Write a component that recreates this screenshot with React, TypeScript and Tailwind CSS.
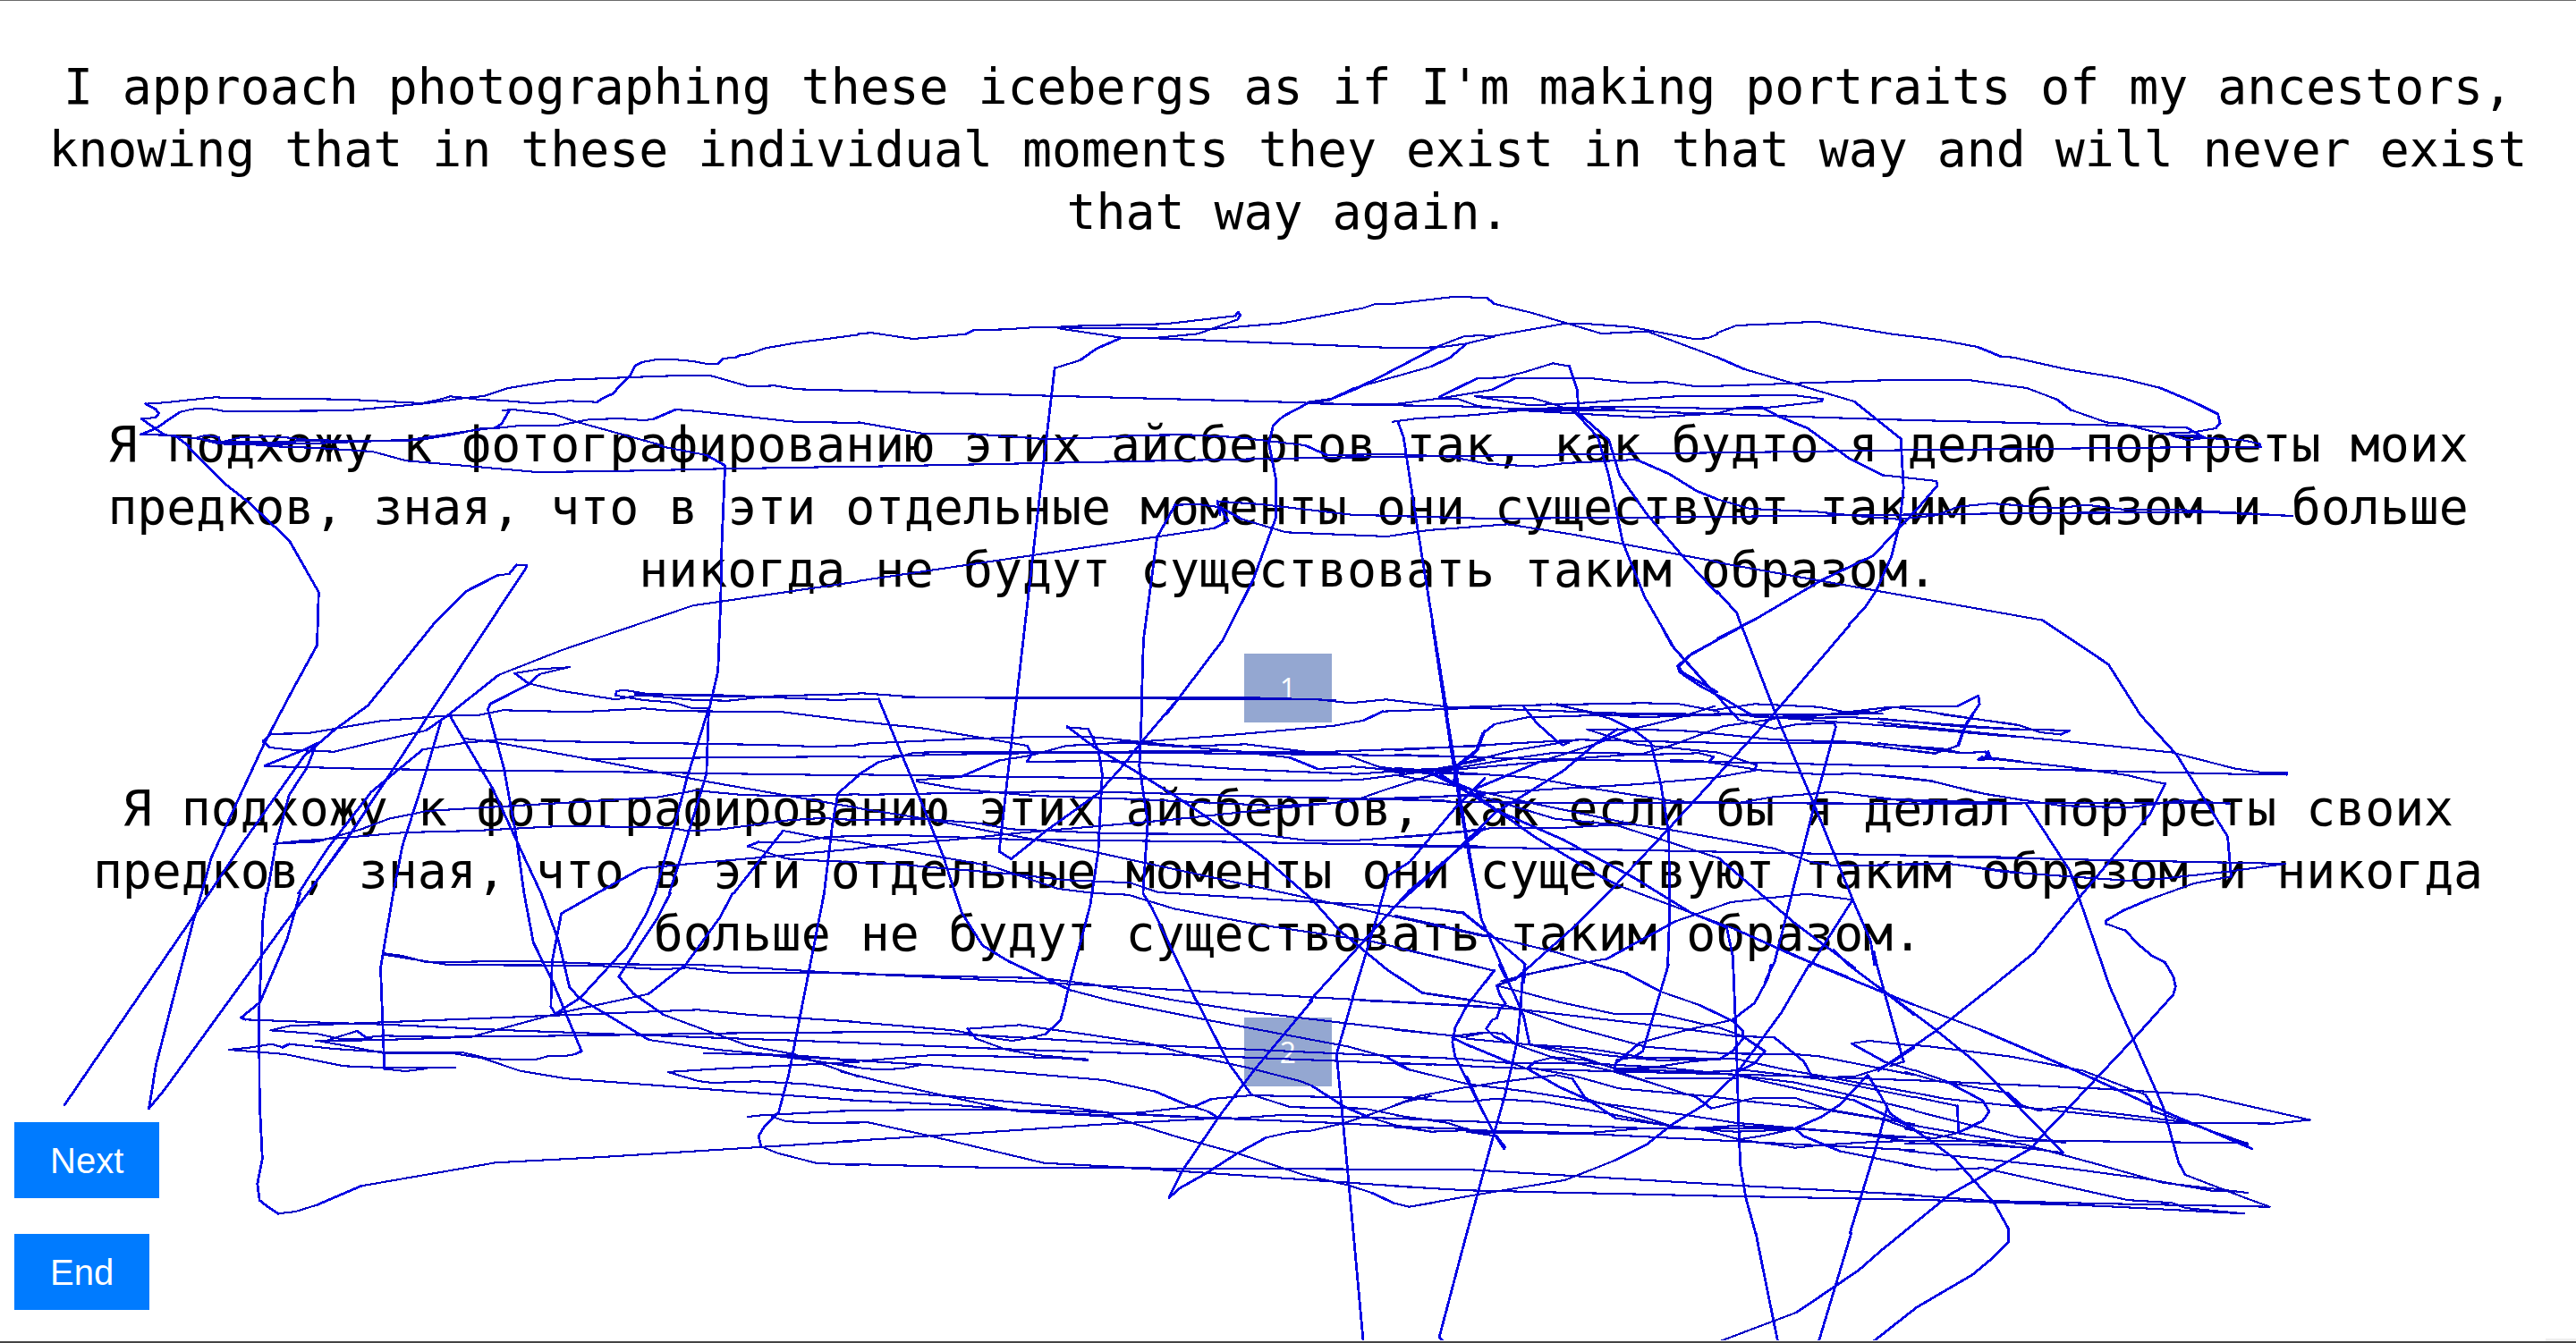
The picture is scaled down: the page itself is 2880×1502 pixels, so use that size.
import React from "react";

type Tile = { x: number; y: number; kx: number; ky: number; strokes: string[] };

// Pen strokes, grouped by board section; each section has its own origin and units per pixel.
const tiles: Tile[] = [
  {
    x: 0, y: 0, kx: 1.6333, ky: 3,
    strokes: [
      "260,1408 284,1404 290,1390 284,1376 266,1358 300,1354 392,1336 430,1339 560,1341 640,1344 770,1356 800,1345 822,1333 850,1338 880,1345 920,1347 980,1357 1040,1348 1090,1352 1104,1336 1118,1325 1130,1302 1150,1265 1160,1230 1172,1218 1200,1209 1225,1208 1265,1215 1294,1225 1310,1224 1320,1206 1344,1202 1352,1194 1366,1192 1398,1171 1455,1153 1510,1140 1568,1126",
      "258,1460 285,1440 328,1386 350,1376 370,1373 392,1376 412,1384 500,1382 630,1381 700,1370 775,1357 850,1338 884,1332 928,1305 1015,1279 1150,1269 1240,1263 1295,1262 1368,1300 1415,1297 1455,1309 1568,1314",
      "258,1408 300,1462 320,1465 345,1500",
      "256,1460 300,1463 350,1472 400,1485 500,1487 580,1480 640,1482 740,1482 780,1475 830,1460 880,1440 905,1440 950,1431 1020,1430 1075,1411 1130,1407 1175,1413 1192,1410 1234,1377 1270,1382 1450,1418 1568,1422",
      "355,1474 375,1463 400,1470 400,1488 560,1492 750,1478 860,1448 905,1438 916,1425 930,1380 918,1379 940,1378 1012,1393 1050,1417 1210,1498",
      "400,1488 440,1470 498,1468 530,1472 590,1484",
      "370,1478 400,1492 480,1496 560,1490",
    ],
  },
  {
    x: 960, y: 300, kx: 1.6333, ky: 3,
    strokes: [
      "0,222 24,220 100,240 195,224 210,211 270,208 330,200 400,203 620,207 650,206 775,187 920,137 945,122 970,124 1090,98 1148,103 1160,122 1228,152 1356,222 1440,215 1568,302",
      "370,198 560,190 688,163 693,150 697,160 692,175 620,223 540,237 480,236 365,205",
      "478,238 435,272 404,312 358,338 336,680 318,970 285,1500",
      "530,237 985,271 1062,268 1110,256 1160,233 1135,228 1105,232 1062,262 960,360 905,410 865,440 820,452",
      "1110,256 1080,303 1045,333 905,405 860,445 830,455",
      "1160,230 1285,190 1320,188 1410,200 1525,240 1550,238 1568,225",
      "0,414 350,431 800,453 850,458 975,460 1060,440 1158,410 1198,372 1340,373 1410,387 1475,385 1530,400 1568,398",
      "820,454 920,462 1085,465 1200,475 1400,467 1568,474",
      "1060,435 1130,372 1175,370 1215,352 1268,322 1298,332 1312,410 1315,490 1370,580 1390,700 1440,830 1510,980 1568,1095",
      "1058,440 1095,442 1130,465 1210,480 1440,504 1568,490",
      "1125,433 1230,438 1270,460 1315,490",
      "1125,433 1225,463 1320,455 1500,432 1568,432",
      "1200,478 1380,480 1568,492",
      "975,518 1020,507 1120,496 1210,480 1380,475",
      "985,520 995,570 1020,870 1075,1500",
      "820,456 775,500 757,530 749,590 762,710 762,840 720,1050 665,1250 562,1500",
      "0,520 115,557 200,558 340,576 410,573 520,563 600,562 690,570 815,597 855,630 980,627 1080,635 1150,660 1240,668 1290,657 1420,645 1480,693 1530,750 1568,778",
      "0,669 520,650 870,638 1568,622",
      "578,797 620,795 660,805 675,850 650,875 340,960 0,1052",
      "660,830 655,785 735,795 900,830 1150,843 1568,837",
      "660,805 700,845 780,889 965,903 1040,882 1185,862 1300,895 1568,988",
      "578,797 545,905 520,1250 516,1500",
      "1310,490 1350,570 1370,700 1395,920 1435,1105 1490,1280 1568,1440",
      "1568,1250 1520,1300 1497,1340 1505,1360 1568,1425",
      "0,1428 120,1444 720,1444 870,1452",
    ],
  },
  {
    x: 1920, y: 300, kx: 1.6333, ky: 3,
    strokes: [
      "0,220 35,195 100,190 180,182 320,224 405,243 475,267 518,299 540,302 640,343 735,371 808,404 870,452 914,492 918,523 910,540 870,553 810,558",
      "0,302 50,342 130,385 250,450 335,575 340,740 333,860 318,970 290,1085 270,1140 240,1200",
      "0,398 320,378 455,377 565,405 620,443 645,478 710,520 740,525 810,558 890,572 960,580 990,592 992,602 850,604 300,614 0,622",
      "0,432 140,429 192,442 190,450 80,473 0,474",
      "0,490 40,470 80,468 112,500 165,540 240,640 302,697 400,717 402,732 370,800 285,967 190,1050 70,1180 0,1245",
      "0,492 300,510 700,529 857,538 890,572 860,580 830,565 880,565",
      "0,778 60,810 180,820 260,835 330,845 400,832 440,803 500,792 620,808 675,797 740,812 850,814 1050,834 900,822 600,824 0,837",
      "0,990 190,1052 594,1184 714,1332 772,1500",
      "0,1088 36,1160 46,1215",
    ],
  },
  {
    x: 0, y: 500, kx: 1.6333, ky: 3,
    strokes: [
      "343,0 408,122 455,190 528,316 582,490 579,668 535,815 482,1000 386,1380 368,1500",
      "490,0 580,6 680,18 742,49 870,69 980,87 1140,83 1320,76 1568,68",
      "1205,0 1290,30 1324,65 1318,330 1316,520 1311,755 1294,890 1290,1100 1275,1190 1240,1400 1222,1500",
      "1294,880 1255,1110 1235,1250 1196,1500",
      "1090,1500 1172,1416 1568,1350",
      "382,1500 440,1340 555,1040 612,950 672,870 795,590 853,485 908,434 930,428 943,398 962,400 960,410 780,910 630,1330 562,1500",
      "545,1500 600,1345 678,1160 772,1018 850,995 915,984 1035,991 1400,1002 1500,1009 1568,1003",
      "562,1500 640,1300 712,1100",
      "484,1072 560,1015 578,998 560,1080 528,1170 503,1340 488,1500",
      "484,1074 600,1079 670,1083 1090,1092 1380,1100 1568,1105",
      "480,990 495,965 560,964 695,922 810,905 875,902 918,886 1060,892 1176,880 1230,889 1425,891 1568,924",
      "480,990 492,1011 540,1020 610,1025 690,990 778,954 820,900 910,768 1025,685 1265,535 1568,454",
      "806,918 770,1140 735,1340 718,1500",
      "820,900 900,1150 950,1350 988,1500",
      "1040,742 985,748 940,762 965,796 1020,820 1125,850 1160,838 1220,835 1380,842 1420,838 1568,831",
      "1040,741 985,765 965,800 895,865 891,884 920,1080 942,1300 957,1500",
      "1185,832 1140,818 1126,822 1124,836 1175,852 1230,860 1262,878 1294,880",
      "1160,832 1300,834 1530,852 1568,848",
      "1180,836 1270,852 1330,854 1390,842",
      "848,981 905,994 1070,1048 1290,1125 1568,1214",
      "1070,1050 1300,1045 1568,1041",
      "500,1334 580,1327 660,1285 710,1250 780,1224 880,1213 1200,1178 1270,1155 1355,1170 1430,1174 1568,1168",
      "500,1334 550,1324 600,1318 740,1296 870,1290 1030,1274 1225,1280 1255,1291 1310,1287 1440,1255 1500,1248 1568,1255",
      "1568,1105 1530,1165 1520,1270 1505,1500",
      "1340,1500 1430,1290 1500,1315 1568,1330",
      "1568,1308 1510,1311 1455,1330 1385,1328 1366,1342 1435,1384 1500,1391 1568,1396",
    ],
  },
  {
    x: 0, y: 1000, kx: 1.6333, ky: 3,
    strokes: [
      "368,0 352,100 285,575 272,722",
      "1196,0 1180,70 1145,180 1060,350 1014,405 1006,380 1008,230 1025,68 1090,0",
      "1224,0 1200,85 1130,280 1156,336 1212,408 1365,511 1450,540 1568,616",
      "118,710 382,0",
      "562,0 525,90 300,660 272,722",
      "548,0 524,155 475,365 440,418 448,424 590,434 700,440 930,460 1200,478 1568,502",
      "486,0 480,90 473,400 474,700 479,890 470,975 474,1030 486,1048 508,1075 540,1068 580,1045 660,982 905,904 1100,885 1300,862 1568,831",
      "718,0 695,250 702,590",
      "988,0 1020,160 1040,315 1058,352 1165,470 1185,492 1310,525 1460,550 1568,560",
      "957,0 974,165 1010,300 1062,530 1050,540 1035,545 1000,547 980,557 935,559 890,554 842,533 700,533 610,522 528,506 516,517 496,506 455,518 418,525",
      "1505,0 1440,610 1422,735 1395,785 1385,815 1390,850 1420,872 1490,905 1568,913",
      "1338,0 1315,80 1252,240 1184,338 1014,405 860,482 700,492 590,496 576,496",
      "702,202 735,210 780,232 955,227 1110,238 1270,240 1380,250 1568,272",
      "702,206 820,241 1080,242 1210,256 1255,250 1340,268 1568,268",
      "494,460 530,445 700,433 1275,391 1370,408 1568,432",
      "494,460 580,472 620,488 710,492",
      "590,498 652,462 668,484 700,478 800,482 950,480 1150,475 1300,470 1568,466",
      "585,497 620,508 700,536 830,538 880,553 950,596 1035,622 1568,696",
      "418,525 440,528 520,540 628,580 700,585 832,584",
      "705,590 740,597 780,588",
      "1285,536 1350,540 1460,545 1568,562",
      "1380,537 1480,560 1568,586",
      "1220,600 1300,590 1568,566",
      "1220,600 1275,630 1300,636 1380,631 1470,640 1568,664",
      "1365,750 1390,745 1568,728",
      "1410,750 1435,765 1490,771 1568,770",
    ],
  },
  {
    x: 960, y: 780, kx: 2.24, ky: 3,
    strokes: [
      "0,8 50,8 135,282 210,530 258,725 310,835 375,888 490,960 530,985 630,1020",
      "110,3 1150,10 1230,22 1320,10 1480,35 1568,37",
      "395,8 352,520 382,545 470,450 600,325 660,235 710,150 800,8",
      "0,83 170,108 330,143 422,165 433,195 422,218 620,217 700,220 940,243 1245,260 1400,245 1500,240",
      "0,159 250,143 420,136 585,136 950,185 1080,205 1150,243 1240,235 1400,255 1568,262",
      "0,203 200,195 420,190 650,185 830,182 1130,188 1568,165",
      "0,262 50,220 140,188 300,185 750,190 830,190 1200,195 1568,203",
      "145,280 255,270 350,215 430,198 520,165 690,153 940,128 1190,98 1265,80 1312,50 1568,37",
      "0,262 300,268 1160,283 1260,278 1400,255 1568,212",
      "145,285 250,310 440,333 700,345 1050,367 1190,358 1250,345 1320,312 1440,262",
      "0,330 200,325 545,317 1000,335 1480,350",
      "1250,345 1568,330",
      "522,100 590,170 680,240 800,340 905,435 1010,535 1135,680 1205,785 1322,915 1412,995 1568,1027",
      "522,104 575,108 600,180 610,260 600,520 580,700 525,980 518,1020",
      "710,8 703,235 724,420 712,660 735,710 845,1020",
      "1465,0 1495,240 1520,450 1560,750",
      "1568,115 1550,180 1505,230 1490,290",
      "650,153 800,168 970,160 1120,185 1220,195 1300,235 1440,262 1490,295 1568,355",
      "1430,255 1568,330",
      "0,375 175,412 300,425 380,445 640,460 1000,462 1130,484 1230,484 1400,468 1568,447",
      "0,413 175,412 320,450 500,495 730,562 1330,735 1568,805",
      "0,508 240,480 400,458 770,415 1050,375 1240,350",
      "0,467 100,465 400,480 890,487 1568,503",
      "0,490 330,568 500,645 590,660 675,665 790,712 1000,765 1280,820 1568,912",
      "0,557 80,560 200,575 380,595 520,616 680,625 750,657 1150,690 1440,712 1515,728 1568,785",
      "1568,440 1380,650 1245,850 1130,1020",
      "1568,275 1490,380 1380,555 1327,600 1300,730 1235,1020",
      "0,930 200,938 460,945 580,965 794,1020",
      "0,930 430,958 1568,1040",
    ],
  },
  {
    x: 1560, y: 700, kx: 2.24, ky: 3,
    strokes: [
      "93,0 150,510 185,780 215,985 285,1200",
      "665,0 692,68 860,318 950,348 1010,332 1100,330 1103,342 1050,600 950,1130 925,1200",
      "868,5 740,98 707,138 712,158 760,202 820,245 890,300 950,310",
      "868,5 950,290 1048,600 1145,920 1190,1060 1200,1140",
      "1138,0 950,295 680,690 550,875 450,1010 320,1165",
      "130,277 300,270 620,262 710,265 810,290",
      "130,275 330,285 600,298 950,300 1220,298",
      "390,265 500,295 600,310 850,300 950,312 1150,310 1500,345 1568,350",
      "322,275 355,330 405,390 420,403 435,395",
      "405,265 540,315 600,355 640,395 665,535 685,700 687,960 682,1150",
      "147,520 160,465 203,420 218,365 248,333 330,310 500,303 850,298",
      "800,272 700,315 590,350 500,400 420,490 250,630 120,800 0,943",
      "0,420 230,402 460,385 800,395 1140,395 1350,430 1410,405 1430,330 1463,265 1460,238 1408,272 1240,275 1050,305 900,310",
      "480,350 600,350 740,356 950,385 1140,392 1370,415 1420,430 1485,425 1490,445 1568,458",
      "480,350 545,378 600,400 810,428 905,470 900,488 800,512 600,535 400,550 150,572 0,585",
      "0,435 350,450 900,462 1568,483",
      "150,480 310,445 400,428 520,428 630,435 760,430 797,442 785,460 690,452",
      "0,495 150,485 360,460 480,445 620,432 700,400 820,340 950,315",
      "150,470 300,420 460,385",
      "555,350 500,400 360,460 190,555",
      "0,480 100,490 340,512 500,550 700,592 860,597 940,578 1095,560 1250,585 1568,598",
      "760,455 920,488 1070,502 1150,498 1250,508 1340,522 1450,560 1568,587",
      "0,503 150,540 350,600 600,670 700,690 950,750 1040,795 1100,808 1260,805 1380,800 1568,832",
      "0,582 160,595 870,598 1568,600",
      "0,712 100,702 250,680 420,680 580,668",
      "0,742 300,748 1568,780",
      "190,560 350,712 510,840 560,875 720,955 850,1020 1000,1110 1130,1180",
      "100,490 250,620 420,720 600,850 740,965 830,1015 845,1110 848,1200",
      "190,565 400,650 550,670 810,782 1000,1000 1150,1150",
      "90,950 170,965 240,1040 325,1138 322,1200",
      "265,1195 400,1150 530,1120 700,995 840,930 1030,902 1145,922 1075,1070 1038,1145",
      "0,975 270,1055 400,1097 480,1130 580,1168",
      "0,1082 248,1160 225,1200",
      "800,285 900,265 1060,275 1120,290 1200,293 1250,275 1330,290 1568,338",
      "950,310 1300,345 1520,372 1568,375",
      "1460,452 1470,442 1500,452 1480,438",
    ],
  },
  {
    x: 1640, y: 1080, kx: 3, ky: 3,
    strokes: [
      "108,0 155,90 190,170 210,265",
      "195,0 187,40 180,150 168,260 130,430 90,570 0,900",
      "217,0 160,50 100,70 110,100 130,130 110,150 100,180 85,185 65,215 90,240 130,258 170,265",
      "100,68 150,50 200,32 360,0",
      "100,70 180,90 310,125 500,166 650,166 850,212 925,240 1000,290 965,330 905,360",
      "430,0 530,27 650,90 780,135 890,188 925,220 925,250 890,290 850,315 750,325 600,348 540,358 495,355",
      "0,118 130,137 175,148 350,208 600,275 870,298 1100,300 1180,307 1500,370",
      "0,138 180,150 730,215 900,240 1030,243 1100,300 1130,325 1155,370 1200,378 1300,375 1380,350 1430,325 1500,278",
      "0,240 60,228 118,230 165,268 300,315 480,355 630,400",
      "0,248 210,268 400,280 600,312 900,315 1060,350 1200,375 1500,430",
      "210,268 400,315 500,350 800,360 900,355",
      "215,270 480,305 640,320 850,318",
      "676,0 590,290 560,310 500,320",
      "495,350 500,330 580,262 740,218 890,185 965,128 1010,45 1020,0",
      "893,0 905,300 912,550 917,670 935,780 968,900",
      "1148,0 1055,160 960,290 900,370 795,470 690,535 600,605 500,655 330,722 0,777",
      "0,268 150,330 205,350 310,410 400,450 500,480 680,540 800,555 920,588 1050,605 1100,614 1180,605 1350,595 1500,590",
      "0,318 150,330 400,330 660,345 900,370 1100,395 1300,440 1500,487",
      "0,340 250,350 480,358 800,365 1150,375 1500,388",
      "205,345 230,325 290,310 400,320 500,348 660,345",
      "495,355 630,400 770,445 820,482 910,460 960,448 1105,448 1220,490 1400,520 1500,555",
      "205,345 350,370 510,415 800,440 960,460 1220,487 1500,535",
      "0,412 100,395 300,370 355,383 395,445 500,515 680,540",
      "0,375 45,475 90,565 125,618",
      "0,400 200,425 450,465 740,505 900,530 1100,548 1500,580",
      "0,460 90,450 260,460 480,500 700,545",
      "0,525 580,548 1100,550 1300,565 1500,595",
      "0,555 400,565 600,548 740,550",
      "0,562 400,567 900,592 1500,622",
      "720,550 820,545 900,540 1000,545 1100,548",
      "690,545 900,560 1100,553",
      "920,585 1000,572 1100,550 1130,575 1250,625 1500,675",
      "600,380 900,380",
      "900,370 1150,425 1300,455 1500,550",
      "905,350 1200,385 1500,445",
      "1105,547 1190,510 1250,470 1345,370 1385,435 1410,478 1370,620 1285,900",
      "0,687 300,705 900,740 1500,772",
      "0,757 800,775 1500,788",
      "1070,-45 1170,0 1500,135",
      "1230,-50 1280,0 1400,90 1500,168",
      "1365,-45 1375,0 1465,325 1420,340",
      "1290,264 1350,255 1500,272",
      "1290,264 1400,325 1500,355",
      "0,560 100,575 128,612",
    ],
  },
  {
    x: 1560, y: 1050, kx: 2.24, ky: 3,
    strokes: [
      "248,108 180,225 150,300 143,350 150,400 180,480 245,650",
      "66,183 200,210",
      "0,215 180,228",
      "0,308 143,328 180,334",
      "143,330 215,318",
      "143,335 190,365",
      "0,395 180,407",
      "0,420 180,428",
      "0,420 30,440 180,490",
      "0,560 60,530 180,500",
      "0,533 150,550 190,550",
      "0,605 180,616",
      "0,595 130,620 200,650",
      "0,628 90,650 180,645",
      "0,635 180,640",
      "0,777 180,777",
      "0,833 180,847",
      "0,890 35,902 180,867",
      "179,990 110,1340 122,1356",
      "903,990 910,1040 958,1356",
      "1142,990 1060,1356",
      "1220,1045 1160,1115 1005,1256 815,1352 745,1354",
      "1230,565 1240,590 1340,680 1400,740 1500,890 1535,975 1535,1022 1490,1080 1445,1130 1305,1240 1195,1356",
    ],
  },
  {
    x: 2100, y: 800, kx: 2.0103, ky: 2.2336,
    strokes: [
      "140,0 310,25 365,45 410,50 430,40 300,37 180,30 0,10",
      "0,20 310,55 430,68 660,95 800,135 860,145 918,145 918,150 850,150 0,128",
      "213,0 195,30 178,78 127,98 0,80",
      "0,72 190,97 240,93 250,105 228,113 265,112 430,132 560,152 620,168 645,173 610,250 540,340 450,460 350,595 250,685 130,790 0,890",
      "0,152 120,167 245,200 410,228 560,233 680,215 790,223",
      "0,210 150,222 790,222",
      "332,222 430,390 520,680 640,980 675,1120 690,1150 830,1210 880,1230 500,1222 250,1215 0,1195",
      "588,0 670,100 785,305 793,405 710,422 610,462 550,490 512,515 512,523 555,540 585,575 615,603 645,620 663,655 668,680 663,700 570,815 430,980 370,1050 345,1083 160,1200 0,1345",
      "0,350 200,357 915,373 790,392 640,410 560,415 430,405 280,393 160,373 0,375",
      "0,680 120,780 220,870 415,1095 390,1065",
      "20,700 230,788 440,888 660,1000 840,1085",
      "80,826 120,830 300,855 460,890 600,950 612,970 615,990 830,1072",
      "80,888 150,915 235,965 249,992 235,1015 180,1045 130,1058 0,1055",
      "180,1045 178,978 80,955",
      "80,914 200,920 500,935 720,950 970,1013 890,1022 650,1020 400,990 150,960 80,945",
      "60,893 130,915 290,945 320,975 360,990 410,980 700,1020 830,1075",
      "80,990 310,1055 420,1070",
      "80,1066 400,1065 830,1071",
      "60,1023 330,1075 480,1120 640,1170 830,1195",
      "60,1035 200,1065 415,1095",
      "60,1072 220,1075 345,1083",
      "60,1090 400,1130 600,1160 750,1190 800,1192",
      "60,1125 130,1138 235,1133 560,1213 660,1220 690,1233 822,1247 500,1228 60,1211",
    ],
  },
  {
    x: 940, y: 1120, kx: 2.3758, ky: 3,
    strokes: [
      "598,0 584,65 545,112 490,128 455,135 400,125 300,100 0,68",
      "337,95 475,82 660,115 820,145 950,190 1080,225 1220,270 1250,285 1340,358 1400,390 1490,425 1568,440",
      "337,95 360,128 440,165 520,183 655,198",
      "600,194 655,201",
      "0,106 170,105 450,122 750,145 1100,165 1568,192",
      "0,140 480,165 900,182 1568,215",
      "0,202 80,200 245,183 500,190 650,196",
      "0,198 220,215 700,267 835,305 910,345 975,372 1005,395",
      "0,212 60,228 110,232 165,228 215,215",
      "0,238 100,270 350,340 460,370 720,390 900,460 1060,515 1230,585 1350,620 1410,645 1470,680 1510,692 1568,680",
      "0,297 300,322 620,360 720,378 900,390 1050,395 1180,383 1568,400",
      "0,333 300,350 500,372 700,385 800,375 940,355 985,330 1090,318 1340,325 1500,323 1568,333",
      "0,370 320,365 600,370 800,382 1000,395 1300,410 1568,428",
      "0,410 70,408 240,455 540,545 760,560 1568,630",
      "0,548 380,560 1568,567",
      "0,473 350,445 700,415 1000,395",
      "1252,0 1100,230 1010,380 905,575 872,662 900,630 970,580 1050,515 1130,460 1200,440 1245,438 1340,410 1400,385 1500,340 1568,320",
      "715,0 960,62 1350,155 1450,190 1510,232 1568,250",
      "890,0 1100,40 1568,110",
      "945,0 1030,210 1090,315 1195,358 1300,360 1390,362 1500,390 1568,402",
      "1358,0 1317,180 1350,620 1388,1146",
      "1380,0 1568,10",
    ],
  },
];

// The pen nib leaves a wider, brighter trace on steep segments than on flat ones.
function tracePaths() {
  const flat: string[] = [];
  const steep: string[] = [];
  for (const t of tiles) {
    for (const stroke of t.strokes) {
      const pts = stroke.split(" ").map((p) => {
        const [px, py] = p.split(",").map(Number);
        return [t.x + px / t.kx, t.y + py / t.ky];
      });
      for (let i = 1; i < pts.length; i++) {
        const [ax, ay] = pts[i - 1];
        const [bx, by] = pts[i];
        const d = `M${ax.toFixed(1)} ${ay.toFixed(1)}L${bx.toFixed(1)} ${by.toFixed(1)}`;
        (Math.abs(by - ay) < Math.abs(bx - ax) * 0.4 ? flat : steep).push(d);
      }
    }
  }
  return { flat: flat.join(""), steep: steep.join("") };
}

const trace = tracePaths();

function Scribble() {
  return (
    <svg
      className="pointer-events-none absolute -top-[2px] left-0 h-[1500px] w-[2880px]"
      viewBox="0 0 2880 1500"
      fill="none"
      strokeLinecap="round"
      shapeRendering="crispEdges"
    >
      <path d={trace.flat} stroke="#0000c4" strokeWidth="2.1" />
      <path d={trace.steep} stroke="#0000e4" strokeWidth="2.8" />
    </svg>
  );
}

function Passage({ lines }: { lines: string[] }) {
  return (
    <p className="w-full text-center font-['DejaVu_Sans_Mono',monospace] text-[54.8px] leading-[70px] text-black">
      {lines.map((l) => (
        <span key={l} className="block whitespace-nowrap">
          {l}
        </span>
      ))}
    </p>
  );
}

function Choice({ label }: { label: string }) {
  return (
    <button className="flex h-[77px] w-[98px] items-center justify-center bg-[#94a7d1] font-['Open_Sans',sans-serif] text-[32px] leading-none text-white">
      {label}
    </button>
  );
}

function Action({ label }: { label: string }) {
  return (
    <button className="h-[85px] bg-[#007bff] px-10 font-['Liberation_Sans',sans-serif] text-[40px] leading-none text-white">
      {label}
    </button>
  );
}

export default function App() {
  return (
    <main className="relative flex h-[1502px] w-[2880px] flex-col overflow-hidden border-t border-b-2 border-t-[#6b6b6b] border-b-[#444444] bg-white">
      <section className="flex flex-col items-center pt-[61px]">
        <Passage
          lines={[
            "I approach photographing these icebergs as if I'm making portraits of my ancestors,",
            "knowing that in these individual moments they exist in that way and will never exist",
            "that way again.",
          ]}
        />
        <div className="mt-[190px] flex w-full flex-col items-center gap-[59px]">
          <Passage
            lines={[
              "Я подхожу к фотографированию этих айсбергов так, как будто я делаю портреты моих",
              "предков, зная, что в эти отдельные моменты они существуют таким образом и больше",
              "никогда не будут существовать таким образом.",
            ]}
          />
          <Choice label="1" />
        </div>
        <div className="mt-[61px] flex w-full flex-col items-center gap-[59px]">
          <Passage
            lines={[
              "Я подхожу к фотографированию этих айсбергов, как если бы я делал портреты своих",
              "предков, зная, что в эти отдельные моменты они существуют таким образом и никогда",
              "больше не будут существовать таким образом.",
            ]}
          />
          <Choice label="2" />
        </div>
      </section>
      <nav className="mt-[40px] flex flex-col items-start gap-10 pl-4">
        <Action label="Next" />
        <Action label="End" />
      </nav>
      <Scribble />
      <div className="absolute right-0 bottom-0 h-[3px] w-[34px] bg-[#eeeeee]" />
    </main>
  );
}
